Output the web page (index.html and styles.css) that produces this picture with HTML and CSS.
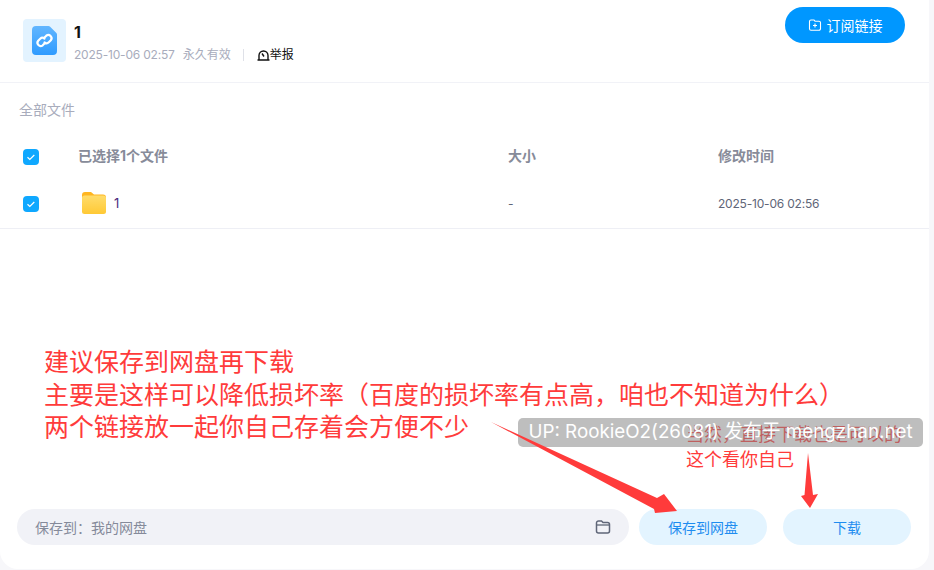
FILE: index.html
```html
<!DOCTYPE html>
<html lang="zh-CN">
<head>
<meta charset="utf-8">
<title>分享文件</title>
<link rel="stylesheet" href="styles.css">
</head>
<body>
<main class="card">
  <header class="head">
    <div class="file-tile">
      <svg class="link-icon" viewBox="0 0 25 29" width="25" height="29">
        <defs><linearGradient id="lg" x1="0" y1="0" x2="0" y2="1"><stop offset="0" stop-color="#62b6ff"/><stop offset="1" stop-color="#2f9bff"/></linearGradient></defs>
        <path d="M4 0H16.500a2 2 0 0 1 1.400.600L24.400 7a2 2 0 0 1 .600 1.400V25a4 4 0 0 1-4 4H4a4 4 0 0 1-4-4V4a4 4 0 0 1 4-4Z" fill="url(#lg)"/>
        <path d="M12.500 11.500l1.800-1.800a3.200 3.200 0 0 1 4.500 4.500l-2 2a3.200 3.200 0 0 1-4.300.2M12.500 17.500l-1.800 1.800a3.200 3.200 0 0 1-4.500-4.500l2-2a3.200 3.200 0 0 1 4.300-.2" fill="none" stroke="#fff" stroke-width="2.200" stroke-linecap="round"/>
      </svg>
    </div>
    <div class="head-info">
      <h1 class="title">1</h1>
      <div class="meta">
        <span class="stamp">2025-10-06 02:57</span>
        <span class="expire">永久有效</span>
        <span class="sep"></span>
        <span class="report">
          <svg viewBox="0 0 13 12" width="13" height="12"><path d="M.5 11H12.500M2 11V6.500a4.500 4.500 0 0 1 9 0V11" fill="none" stroke="#111" stroke-width="1.400"/><path d="M5 4.500L7 7.500" stroke="#111" stroke-width="1.400"/></svg>举报
        </span>
      </div>
    </div>
    <button class="subscribe">
      <svg viewBox="0 0 14 14" width="14" height="14"><path d="M1.500 3.500a1.500 1.500 0 0 1 1.500-1.500h3l1 1.200h4a1.500 1.500 0 0 1 1.500 1.500v6a1.500 1.500 0 0 1-1.500 1.500H3a1.500 1.500 0 0 1-1.500-1.500Z" fill="none" stroke="#fff" stroke-width="1.100"/><path d="M7 5.500v4M5 7.500h4" stroke="#fff" stroke-width="1.100"/></svg>
      订阅链接
    </button>
  </header>

  <div class="crumb">全部文件</div>

  <div class="row row-head">
    <span class="check"><svg viewBox="0 0 16 16" width="16" height="16"><path d="M4.500 8.300l2.300 2.200 4.500-4.500" fill="none" stroke="#fff" stroke-width="1.200"/></svg></span>
    <span class="col-name">已选择1个文件</span>
    <span class="col-size">大小</span>
    <span class="col-time">修改时间</span>
  </div>
  <div class="row row-file">
    <span class="check"><svg viewBox="0 0 16 16" width="16" height="16"><path d="M4.500 8.300l2.300 2.200 4.500-4.500" fill="none" stroke="#fff" stroke-width="1.200"/></svg></span>
    <span class="col-name file-name">
      <svg viewBox="0 0 24 22" width="24" height="22">
        <defs><linearGradient id="fg" x1="0" y1="0" x2="0" y2="1"><stop offset="0" stop-color="#ffdc6b"/><stop offset="1" stop-color="#ffc935"/></linearGradient></defs>
        <path d="M0 3a3 3 0 0 1 3-3h6l3 2.500h9a3 3 0 0 1 3 3V8H0Z" fill="#ffb520"/>
        <rect y="3.500" width="24" height="18.500" rx="2.500" fill="url(#fg)"/>
      </svg>
      <span>1</span>
    </span>
    <span class="col-size">-</span>
    <span class="col-time stamp">2025-10-06 02:56</span>
  </div>

  <div class="spacer"></div>

  <footer class="foot">
    <div class="path">
      <span>保存到：我的网盘</span>
      <svg viewBox="0 0 16 16" width="16" height="16"><path d="M1.500 4a2 2 0 0 1 2-2h3l1.500 1.500h4.500a2 2 0 0 1 2 2V12a2 2 0 0 1-2 2h-9a2 2 0 0 1-2-2Z" fill="none" stroke="#5f6678" stroke-width="1.500"/><path d="M1.500 6h13" stroke="#5f6678" stroke-width="1.300"/></svg>
    </div>
    <button class="action">保存到网盘</button>
    <button class="action">下载</button>
  </footer>
</main>

<div class="note note-main">建议保存到网盘再下载<br>主要是这样可以降低损坏率（百度的损坏率有点高，咱也不知道为什么）<br>两个链接放一起你自己存着会方便不少</div>
<div class="note note-side">当然，直接下载也是可以的<br>这个看你自己</div>
<div class="watermark">UP: RookieO2(26081) 发布于 mengzhan.net</div>
<svg class="arrows" viewBox="0 0 934 570" width="934" height="570">
  <path d="M491 422L657 498L664 494L677 511L655 513L654 509Z" fill="#ff3b3b"/>
  <path d="M808 453L804.500 495L801 496L810 508L818 494L813 495Z" fill="#ff3b3b"/>
</svg>
</body>
</html>
```
FILE: styles.css
```css
* { box-sizing: border-box; }
html, body { margin: 0; height: 100%; overflow: hidden; }
body {
  position: relative;
  background: #f7f7fa;
  font-family: Inter, "Noto Sans CJK SC", sans-serif;
  color: #111;
}
.card {
  width: 929px;
  height: 569px;
  background: #fff;
  border-radius: 0 0 18px 18px;
  display: flex;
  flex-direction: column;
}
.head {
  height: 83px;
  flex: none;
  display: flex;
  padding: 19px 24px 0 23px;
  border-bottom: 1px solid #f1f2f7;
}
.file-tile {
  width: 43px;
  height: 43px;
  background: #e3f3ff;
  border-radius: 4px;
  display: flex;
  align-items: center;
  justify-content: center;
}
.head-info { margin-left: 8px; flex: 1; }
.title { margin: 3px 0 0; font-size: 16px; line-height: 20px; font-weight: 700; color: #111; }
.meta {
  display: flex;
  align-items: center;
  margin-top: 4px;
  font-size: 12px;
  line-height: 18px;
  color: #a8acbc;
}
.stamp { letter-spacing: -.2px; }
.expire { margin-left: 8px; }
.sep { width: 1px; height: 12px; background: #dfe1e8; margin: 0 13px 0 12px; }
.report { display: flex; align-items: center; color: #111; }
.subscribe {
  width: 120px;
  height: 36px;
  margin-top: -12px;
  border: 0;
  border-radius: 18px;
  background: #0097ff;
  color: #fff;
  font: 14px "Noto Sans CJK SC", sans-serif;
  display: flex;
  align-items: center;
  justify-content: center;
  gap: 5px;
}
.crumb { padding: 18px 0 0 19px; font-size: 14px; line-height: 18px; color: #a8acbc; height: 49px; flex: none; }
.row { display: flex; align-items: center; padding-left: 23px; flex: none; font-size: 12px; }
.row-head { height: 46px; font-size: 14px; font-weight: 700; color: #878b99; }
.row-head .check { margin-top: 4px; }
.row-file { height: 51px; border-bottom: 1px solid #eeeff5; color: #5f6678; }
.row-file .check { margin-top: 2px; }
.check {
  width: 16px;
  height: 16px;
  border-radius: 4px;
  background: #0fa8ff;
  display: flex;
  flex: none;
}
.col-name { width: 430px; margin-left: 39px; flex: none; }
.col-size { width: 210px; flex: none; }
.col-time { flex: 1; }
.file-name { display: flex; align-items: center; gap: 8px; font-size: 13px; color: #4b2a7c; padding-left: 4px; }
.spacer { flex: 1; }
.foot { display: flex; gap: 10px; padding: 0 18px 24px 17px; flex: none; }
.path {
  width: 612px;
  height: 36px;
  border-radius: 18px;
  background: #f1f2f7;
  padding: 0 18px;
  display: flex;
  align-items: center;
  justify-content: space-between;
  font-size: 14px;
  color: #858a9a;
}
.action {
  width: 128px;
  height: 36px;
  border: 0;
  border-radius: 18px;
  background: #e3f4ff;
  color: #1e8cf0;
  font: 14px "Noto Sans CJK SC", sans-serif;
}
.action + .action { margin-left: 6px; }
.note { position: absolute; color: #ff3b3b; font-family: "Noto Sans CJK SC", sans-serif; white-space: nowrap; }
.note-main { left: 44px; top: 344px; font-size: 25px; line-height: 32.500px; }
.note-side { left: 686px; top: 421px; font-size: 18px; line-height: 25px; }
.watermark {
  position: absolute;
  left: 518px;
  top: 418px;
  width: 405px;
  height: 29px;
  border-radius: 5px;
  background: rgba(130, 130, 130, .52);
  color: #fff;
  font-size: 18.800px;
  line-height: 28px;
  text-align: center;
  white-space: nowrap;
}
.arrows { position: absolute; left: 0; top: 0; pointer-events: none; }
```
